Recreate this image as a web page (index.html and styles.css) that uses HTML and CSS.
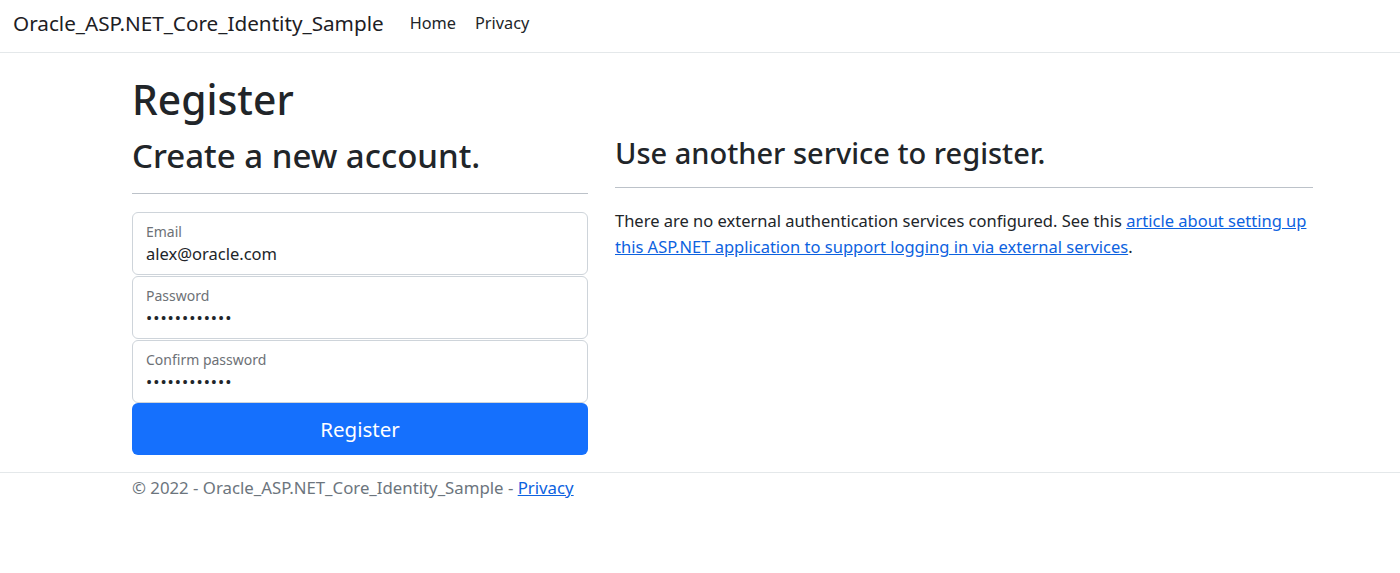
FILE: index.html
```html
<!DOCTYPE html>
<html lang="en">
<head>
<meta charset="utf-8">
<title>Register - Oracle_ASP.NET_Core_Identity_Sample</title>
<link rel="stylesheet" href="styles.css">
</head>
<body>
<header class="navbar">
  <a class="brand" href="#">Oracle_ASP.NET_Core_Identity_Sample</a>
  <nav class="nav">
    <a class="nav-link" href="#">Home</a>
    <a class="nav-link" href="#">Privacy</a>
  </nav>
</header>
<main class="container">
  <h1 class="title">Register</h1>
  <div class="row">
    <div class="col-left">
      <form class="register-form">
        <h2 class="heading-left">Create a new account.</h2>
        <hr class="rule">
        <div class="floating">
          <label class="float-label">Email</label>
          <div class="float-value">alex@oracle.com</div>
        </div>
        <div class="floating">
          <label class="float-label">Password</label>
          <div class="float-value dots">••••••••••••</div>
        </div>
        <div class="floating floating-last">
          <label class="float-label">Confirm password</label>
          <div class="float-value dots">••••••••••••</div>
        </div>
        <button type="button" class="btn-primary">Register</button>
      </form>
    </div>
    <div class="col-right">
      <section>
        <h3 class="heading-right">Use another service to register.</h3>
        <hr class="rule rule-right">
        <p class="info">There are no external authentication services configured. See this <a href="#" class="link">article about setting up this ASP.NET application to support logging in via external services</a>.</p>
      </section>
    </div>
  </div>
</main>
<footer class="footer">
  <div class="footer-inner">© 2022 - Oracle_ASP.NET_Core_Identity_Sample - <a href="#" class="link">Privacy</a></div>
</footer>
</body>
</html>
```
FILE: styles.css
```css
* { box-sizing: border-box; }
html, body { margin: 0; padding: 0; }
body {
  font-family: "Noto Sans", "Open Sans", sans-serif;
  font-size: 16.5px;
  line-height: 26px;
  color: #212529;
  background: #fff;
}
.navbar {
  display: flex;
  align-items: flex-start;
  height: 53px;
  padding: 8px 0 0 13px;
  border-bottom: 1px solid #e4e8ea;
}
.brand {
  font-size: 20.7px;
  line-height: 30px;
  color: #1d2024;
  text-decoration: none;
  margin-right: 26px;
}
.nav { display: flex; gap: 19px; padding-top: 2px; }
.nav-link {
  color: #212529;
  text-decoration: none;
  font-size: 16.3px;
  line-height: 26px;
}
.container {
  padding-left: 132px;
  width: 1313px;
}
.title {
  margin: 20px 0 0;
  font-size: 40.8px;
  line-height: 52px;
  font-weight: 500;
}
.row {
  display: flex;
  gap: 27px;
}
.col-left { width: 456px; }
.col-right { width: 698px; }
.heading-left {
  margin: 10px 0 0;
  font-size: 33px;
  line-height: 42px;
  font-weight: 500;
}
.heading-right {
  margin: 10px 0 0;
  font-size: 29px;
  line-height: 36px;
  font-weight: 500;
}
.rule {
  margin: 16px 0 18px;
  border: 0;
  border-top: 1px solid #bcc2c9;
}
.rule-right { margin-bottom: 20px; }
.floating {
  height: 63px;
  border: 1px solid #ced4da;
  border-radius: 6px;
  padding: 9px 13px 0;
  margin-bottom: 1px;
}
.floating-last { margin-bottom: 0; }
.float-label {
  display: block;
  font-size: 14px;
  line-height: 20px;
  color: #6d7176;
}
.float-value {
  font-size: 16.5px;
  line-height: 24px;
  color: #212529;
}
.dots {
  font-size: 16.5px;
  letter-spacing: 1px;
  line-height: 24px;
}
.btn-primary {
  display: block;
  width: 100%;
  height: 52px;
  border: 0;
  border-radius: 6px;
  background: #1570fd;
  color: #fff;
  font-family: inherit;
  font-size: 20.5px;
  cursor: pointer;
}
.info { margin: 0; }
.link { color: #0d62e0; text-decoration: underline; }
.footer {
  margin-top: 17px;
  border-top: 1px solid #e4e8ea;
}
.footer-inner {
  padding-left: 132px;
  padding-top: 2px;
  font-size: 16.8px;
  color: #6c757d;
}
```
